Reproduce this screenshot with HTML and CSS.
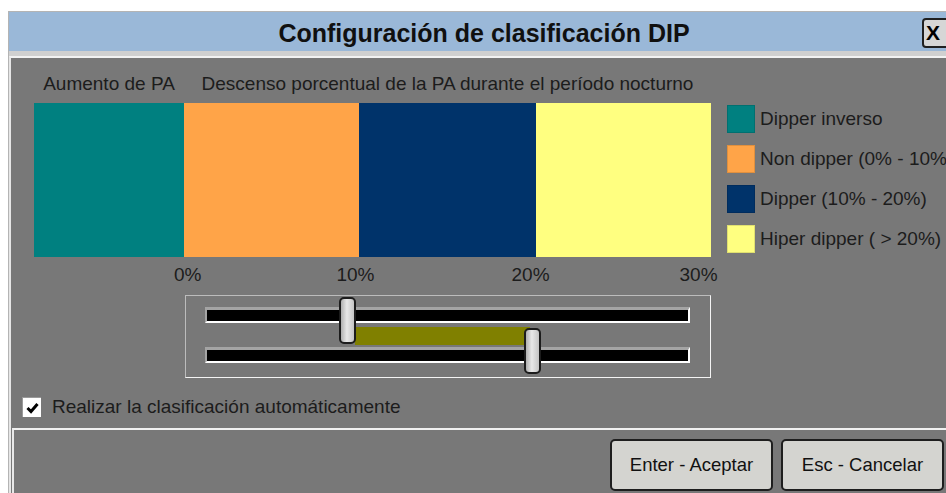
FILE: index.html
```html
<!DOCTYPE html>
<html lang="es">

<head>
    <meta charset="UTF-8">
    <meta name="viewport" content="width=device-width, initial-scale=1.0">
    <title>Configuración de clasificación DIP</title>
    <link rel="stylesheet" href="styles.css">
</head>

<body>

    <div class="window">
        <div class="titlebar">
            <span class="title">Configuración de clasificación DIP</span>
            <button class="close">X</button>
        </div>

        <div class="client">
            <div class="main">
                <div class="chart">
                    <div class="chart-main">
                        <div class="captions">
                            <span class="cap-up">Aumento de PA</span>
                            <span class="cap-down">Descenso porcentual de la PA durante el período nocturno</span>
                        </div>
                        <div class="bar">
                            <div class="seg seg-inv"></div>
                            <div class="seg seg-non"></div>
                            <div class="seg seg-dip"></div>
                            <div class="seg seg-hip"></div>
                        </div>
                        <div class="ticks">
                            <span>0%</span>
                            <span>10%</span>
                            <span>20%</span>
                            <span>30%</span>
                        </div>
                        <div class="range">
                            <div class="track"></div>
                            <div class="track"></div>
                            <div class="fill"></div>
                            <div class="thumb thumb-low"></div>
                            <div class="thumb thumb-high"></div>
                        </div>
                    </div>

                    <ul class="legend">
                        <li><span class="swatch seg-inv"></span>Dipper inverso</li>
                        <li><span class="swatch seg-non"></span>Non dipper (0% - 10%)</li>
                        <li><span class="swatch seg-dip"></span>Dipper (10% - 20%)</li>
                        <li><span class="swatch seg-hip"></span>Hiper dipper ( &gt; 20%)</li>
                    </ul>
                </div>

                <label class="auto">
                    <span class="check">
                        <svg width="13" height="12" viewBox="0 0 13 12">
                            <polyline points="1.5,6 5,9.5 11.5,2" fill="none" stroke="#000" stroke-width="3"/>
                        </svg>
                    </span>
                    Realizar la clasificación automáticamente
                </label>
            </div>

            <div class="footer">
                <button class="btn">Enter - Aceptar</button>
                <button class="btn">Esc - Cancelar</button>
            </div>
        </div>
    </div>

</body>

</html>
```

FILE: styles.css
```css
body {
    margin: 0;
    width: 946px;
    height: 493px;
    overflow: hidden;
    background-color: #ffffff;
    font-family: "Liberation Sans", Arial, sans-serif;
    font-size: 19px;
    color: #1c1c1c;
}

.window {
    margin: 11px 0 0 8px;
    width: 960px;
    height: 482px;
    border-top: 1px solid #b4b4b4;
    border-left: 1px solid #b4b4b4;
    display: flex;
    flex-direction: column;
}

.titlebar {
    height: 39px;
    background-color: #9ab8d8;
    border-bottom: 5px solid #d0d0d0;
    display: flex;
    align-items: center;
    overflow: hidden;
}

.title {
    width: 874px;
    padding: 3px 0 0 38px;
    text-align: center;
    font-size: 25px;
    font-weight: bold;
    color: #101010;
}

.close {
    width: 32px;
    height: 30px;
    margin: 3px 0 0 1px;
    padding: 0 0 0 2px;
    text-align: left;
    background-color: #d6d6d6;
    border: 2px solid #202020;
    border-radius: 4px;
    font-family: "Liberation Sans", Arial, sans-serif;
    font-size: 21px;
    font-weight: bold;
    color: #000;
}

.client {
    flex: 1;
    background-color: #787878;
    border-top: 2px solid #f2f2f2;
    border-left: 2px solid #e6e6e6;
    display: flex;
    flex-direction: column;
}

.main {
    height: 370px;
    box-sizing: border-box;
    padding: 15px 0 0 0;
}

.chart {
    display: flex;
    padding-left: 23px;
}

.chart-main {
    width: 677px;
}

.captions {
    display: flex;
    line-height: 22px;
    margin-bottom: 8px;
    white-space: nowrap;
}

.cap-up {
    width: 150px;
    text-align: center;
}

.cap-down {
    width: 527px;
    text-align: center;
}

.bar {
    display: flex;
    height: 154px;
}

.seg-inv { background-color: #008080; }
.seg-non { background-color: #ffa448; }
.seg-dip { background-color: #00336a; }
.seg-hip { background-color: #ffff80; }

.bar .seg-inv { width: 150px; }
.bar .seg-non { width: 175px; }
.bar .seg-dip { width: 177px; }
.bar .seg-hip { width: 175px; }

.ticks {
    display: flex;
    height: 22px;
    line-height: 22px;
    margin: 7px 0 9px 0;
}

.ticks span {
    width: 40px;
    text-align: center;
}

.ticks span:nth-child(1) { margin-left: 140px; }
.ticks span:nth-child(2) { margin-left: 135px; }
.ticks span:nth-child(3) { margin-left: 137px; }
.ticks span:nth-child(4) { margin-left: 130px; }

.range {
    position: relative;
    margin-left: 151px;
    width: 526px;
    height: 83px;
    box-sizing: border-box;
    border: 1px solid #bcbcbc;
    border-right-color: #f4f4f4;
    border-bottom-color: #f4f4f4;
    padding: 11px 0 0 19px;
}

.track {
    width: 485px;
    height: 16px;
    box-sizing: border-box;
    background-color: #000;
    border-top: 3px solid #a4a4a4;
    border-left: 2px solid #a4a4a4;
    border-bottom: 2px solid #ffffff;
    border-right: 2px solid #ffffff;
}

.track + .track {
    margin-top: 24px;
}

.fill {
    position: absolute;
    left: 169px;
    top: 31px;
    width: 175px;
    height: 18px;
    background-color: #808000;
}

.thumb {
    position: absolute;
    width: 17px;
    height: 47px;
    box-sizing: border-box;
    border: 2px solid #1c1c1c;
    border-radius: 5px;
    background: linear-gradient(to right, #b0b0b0, #e8e8e8 45%, #c4c4c4);
}

.thumb-low {
    left: 153px;
    top: 1px;
}

.thumb-high {
    left: 338px;
    top: 32px;
    height: 46px;
}

.legend {
    list-style: none;
    margin: 31px 0 0 16px;
    padding: 0;
    white-space: nowrap;
}

.legend li {
    display: flex;
    align-items: center;
    height: 28px;
    margin-bottom: 11px;
    padding-top: 1px;
}

.swatch {
    width: 28px;
    height: 28px;
    box-sizing: border-box;
    border: 1px solid rgba(0, 0, 0, 0.12);
    margin-right: 5px;
}

.auto {
    display: flex;
    align-items: center;
    margin: 18px 0 0 11px;
}

.check {
    width: 19px;
    height: 20px;
    box-sizing: border-box;
    margin-right: 11px;
    background-color: #fff;
    border-top: 1px solid #9a9a9a;
    border-left: 1px solid #9a9a9a;
    display: flex;
    align-items: center;
    justify-content: center;
}

.footer {
    flex: 1;
    margin-left: 1px;
    border-top: 2px solid #f0f0f0;
    border-left: 2px solid #e8e8e8;
    display: flex;
    justify-content: flex-end;
    align-items: flex-start;
    gap: 8px;
    padding: 9px 25px 0 0;
}

.btn {
    width: 163px;
    height: 52px;
    background-color: #d4d4d0;
    border: 2px solid #1e1e1e;
    border-radius: 5px;
    font-family: "Liberation Sans", Arial, sans-serif;
    font-size: 18.5px;
    color: #111;
}
```
